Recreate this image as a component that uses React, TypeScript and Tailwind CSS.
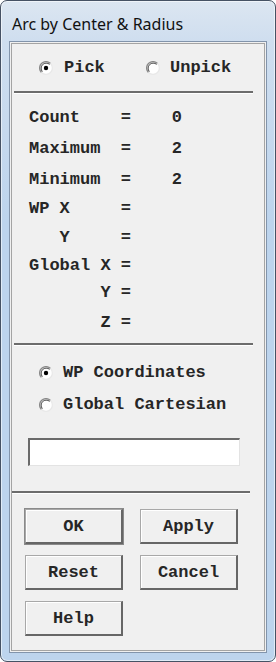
import React from "react";

const mono = "font-['Liberation_Mono','Courier_New',monospace] font-bold text-[17px] leading-none text-[#262626]";

function Radio({ checked }: { checked?: boolean }) {
  return (
    <svg width="14" height="14" viewBox="0 0 14 14" className="shrink-0">
      <circle cx="7" cy="7" r="6.3" fill="#ffffff" />
      <path d="M2.5 11.5 A6.3 6.3 0 0 1 11.5 2.5" fill="none" stroke="#8a8a8a" strokeWidth="1.4" />
      <path d="M3.4 10.6 A5.1 5.1 0 0 1 10.6 3.4" fill="none" stroke="#4a4a4a" strokeWidth="1" />
      <path d="M11.5 2.5 A6.3 6.3 0 0 1 2.5 11.5" fill="none" stroke="#e8e8e8" strokeWidth="1.2" />
      {checked && <circle cx="7" cy="7" r="2.2" fill="#000000" />}
    </svg>
  );
}

function Separator({ className = "ml-[2px] w-[239px]" }: { className?: string }) {
  return <div className={`${className} h-[3px] border-t-2 border-t-[#6c6c6c] border-b border-b-[#ffffff]`} />;
}

function Btn({ label, main }: { label: string; main?: boolean }) {
  return (
    <button
      className={`w-[98px] h-[35px] flex items-center justify-center bg-[#f0f0f0] border border-t-[#a8a8a8] border-l-[#a8a8a8] border-r-2 border-b-2 border-r-[#666666] border-b-[#666666] shadow-[inset_1px_1px_0_#ffffff] ${
        main ? "outline outline-1 outline-[#8a8a8a]" : ""
      } ${mono}`}
    >
      {label}
    </button>
  );
}

const rows: { text: string; h: string }[] = [
  { text: "Count    =    0", h: "h-[31px]" },
  { text: "Maximum  =    2", h: "h-[31px]" },
  { text: "Minimum  =    2", h: "h-[30px]" },
  { text: "WP X     =", h: "h-[28px]" },
  { text: "   Y     =", h: "h-[30px]" },
  { text: "Global X =", h: "h-[26px]" },
  { text: "       Y =", h: "h-[29px]" },
  { text: "       Z =", h: "h-[30px]" },
];

export default function App() {
  return (
    <div className="w-[276px] h-[662px] rounded-t-[7px] rounded-b-[7px] border border-[#465264] bg-[linear-gradient(to_bottom,#dce6f1_0px,#cfdeef_40px,#bdd4ed_220px,#bdd4ed_100%)] shadow-[inset_0_0_0_1px_rgba(255,255,255,0.55)] px-[8px] pb-[8px] flex flex-col">
      {/* title */}
      <div className="h-[40px] flex items-center pl-[3px] pt-[5px] font-['Noto_Sans','Open_Sans',sans-serif] text-[16px] text-[#111111]">
        Arc by Center &amp; Radius
      </div>

      {/* client */}
      <div className="flex-1 border border-[#8294ab] bg-[#f0f0f0] p-[1px] flex">
        <div className="flex-1 border border-[#a4a4a4] flex flex-col">
          {/* pick / unpick */}
          <div className="h-[47px] flex items-center">
            <div className="pl-[27px] w-[134px] flex items-center gap-[11px]">
              <Radio checked />
              <span className={mono}>Pick</span>
            </div>
            <div className="flex items-center gap-[10px]">
              <Radio />
              <span className={mono}>Unpick</span>
            </div>
          </div>
          <Separator />

          {/* counts */}
          <div className="pt-[8px] pb-[6px] pl-[17px] flex flex-col">
            {rows.map((r, i) => (
              <div key={i} className={`${r.h} flex items-center whitespace-pre ${mono}`}>
                {r.text}
              </div>
            ))}
          </div>
          <Separator />

          {/* coordinate system */}
          <div className="pt-[18px] flex flex-col gap-[15px] pl-[27px]">
            <div className="flex items-center gap-[10px]">
              <Radio checked />
              <span className={mono}>WP Coordinates</span>
            </div>
            <div className="flex items-center gap-[10px]">
              <Radio />
              <span className={mono}>Global Cartesian</span>
            </div>
          </div>
          <div className="mt-[25px] ml-[16px] w-[212px] h-[28px] bg-[#ffffff] border-t-2 border-l-2 border-t-[#6a6a6a] border-l-[#6a6a6a] border-r border-b border-r-[#e3e3e3] border-b-[#e3e3e3]" />
          <div className="mt-[25px]">
            <Separator className="ml-0 w-[238px]" />
          </div>

          {/* buttons */}
          <div className="pt-[15px] pl-[13px] grid grid-cols-[98px_98px] gap-x-[17px] gap-y-[11px]">
            <Btn label="OK" main />
            <Btn label="Apply" />
            <Btn label="Reset" />
            <Btn label="Cancel" />
            <Btn label="Help" />
          </div>
        </div>
      </div>
    </div>
  );
}
